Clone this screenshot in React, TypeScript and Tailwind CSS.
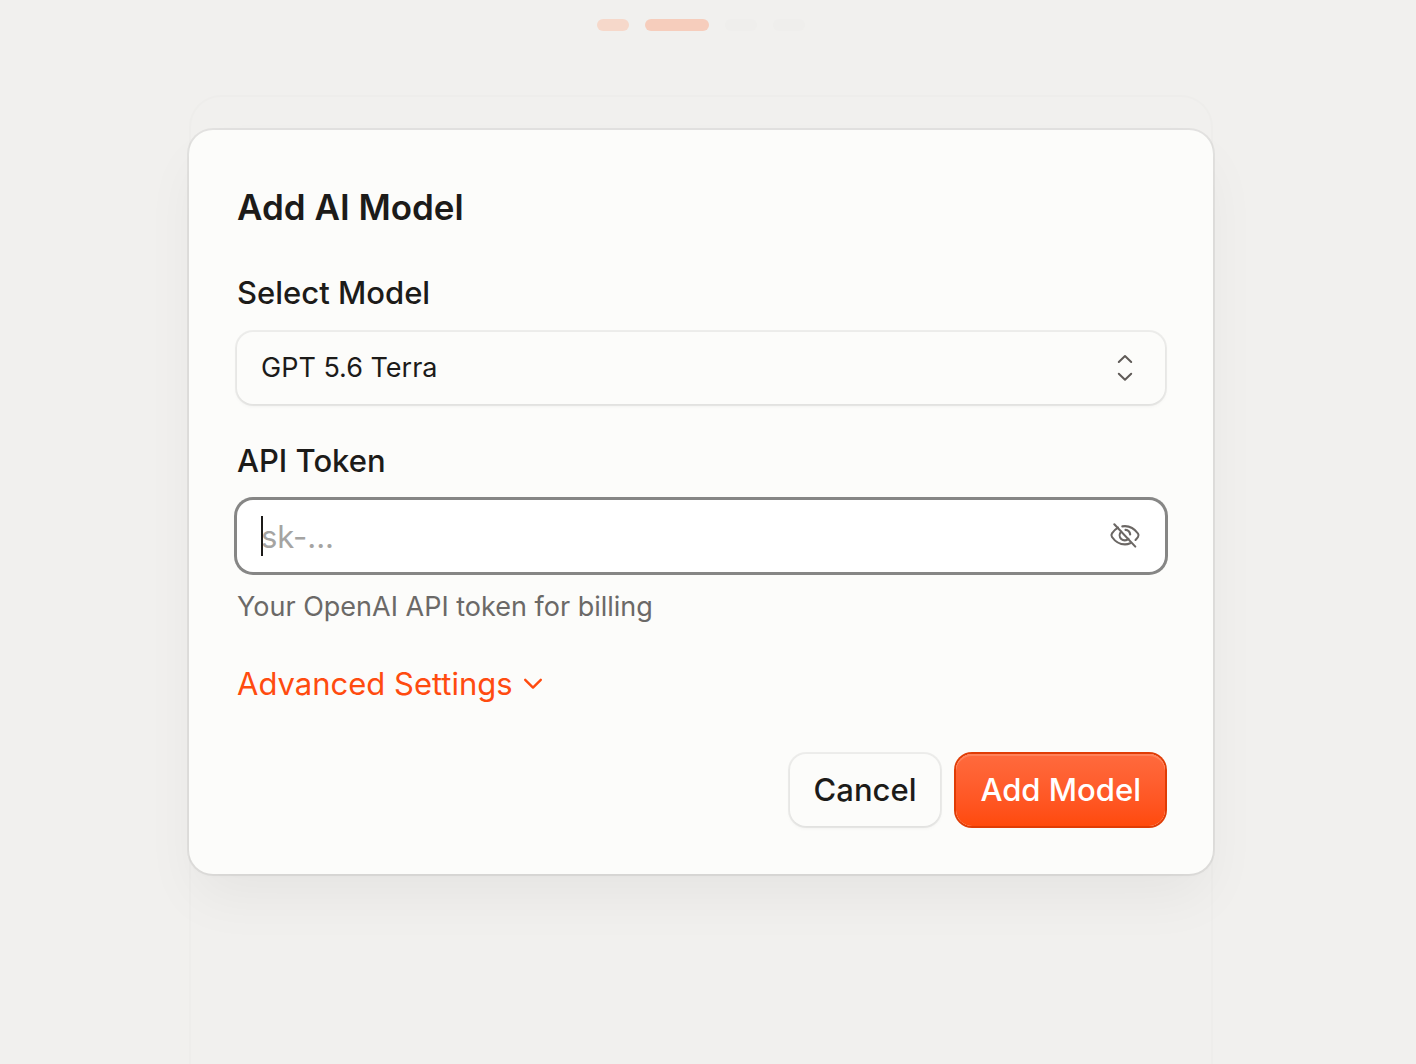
import { useState } from "react";

const steps = ["done", "current", "upcoming", "upcoming"];

const stepStyles: Record<string, string> = {
  done: "w-8 bg-[#f6d8ca]",
  current: "w-16 bg-[#f6cdbc]",
  upcoming: "w-8 bg-[#efeeec]",
};

const SelectorIcon = () => (
  <svg
    className="pointer-events-none absolute right-6 size-8 text-[#5f5a57]"
    viewBox="0 0 32 32"
    fill="none"
    stroke="currentColor"
    strokeWidth={2}
    strokeLinecap="round"
    strokeLinejoin="round"
    aria-hidden="true"
  >
    <path d="M9.8 10 16 4l6.200 6" />
    <path d="M9.8 21.800 16 27.800l6.200-6" />
  </svg>
);

const EyeOffIcon = () => (
  <svg
    className="size-8"
    viewBox="0 0 32 32"
    fill="none"
    stroke="currentColor"
    strokeWidth={2.1}
    strokeLinecap="round"
    strokeLinejoin="round"
    aria-hidden="true"
  >
    <path d="M5.300 4.300 26.300 26.600" />
    <path d="M13.300 6.400c1-.2 1.700-.3 2.700-.3 6 0 10.500 4 13 7.400.8 1.200.8 2.300 0 3.500-.7 1.100-1.500 2-2.500 3" />
    <path d="M9 7.600C6.400 9 4.600 11.100 3 13.400c-.8 1.200-.8 2.400 0 3.600 2.500 3.600 7 7.400 13 7.400 2 0 3.600-.4 5.200-1.100" />
    <path d="M12.100 11.700a5 5 0 0 0 7.300 7.100" />
    <path d="M16.500 9.900a5.300 5.300 0 0 1 4.700 4.600" />
  </svg>
);

const ChevronIcon = () => (
  <svg
    className="size-6"
    viewBox="0 0 24 24"
    fill="none"
    stroke="currentColor"
    strokeWidth={2.4}
    strokeLinecap="round"
    strokeLinejoin="round"
    aria-hidden="true"
  >
    <path d="M4.200 7.800 12 15.600l7.800-7.800" />
  </svg>
);

const AddModelDialog = () => {
  const [model, setModel] = useState("gpt-5.6-terra");
  const [token, setToken] = useState("");
  const [showToken, setShowToken] = useState(false);

  return (
    <form
      role="dialog"
      aria-labelledby="dialog-title"
      onSubmit={(e) => e.preventDefault()}
      className="w-full max-w-5xl rounded-3xl bg-[#fcfcfa] p-12 shadow-[0_0_0_2px_rgba(0,0,0,0.06),0_2px_4px_rgba(0,0,0,0.02),0_28px_56px_-6px_rgba(0,0,0,0.05)]"
    >
      <h2 id="dialog-title" className="text-[35px]/[58px] font-semibold">
        Add AI Model
      </h2>

      <div className="mt-8 flex flex-col gap-3.5">
        <label htmlFor="model" className="text-[31px]/[50px] font-medium">
          Select Model
        </label>
        <div className="relative flex items-center">
          <select
            id="model"
            value={model}
            onChange={(e) => setModel(e.target.value)}
            className="h-18 w-full appearance-none rounded-2xl bg-[#fcfcfa] px-6 text-[27px] shadow-[0_0_0_2px_rgba(0,0,0,0.06),0_2px_4px_rgba(0,0,0,0.06)] outline-none"
          >
            <option value="gpt-5.6-terra">GPT 5.6 Terra</option>
          </select>
          <SelectorIcon />
        </div>
      </div>

      <div className="mt-8 flex flex-col gap-3.5">
        <label htmlFor="token" className="text-[31px]/[50px] font-medium">
          API Token
        </label>
        <div className="relative flex h-18 items-center rounded-2xl bg-white px-6 ring-3 ring-[#868685]">
          <input
            id="token"
            type={showToken ? "text" : "password"}
            value={token}
            onChange={(e) => setToken(e.target.value)}
            placeholder="sk-..."
            aria-describedby="token-help"
            className="peer min-w-0 flex-1 bg-transparent pt-0.5 text-[31px] outline-none placeholder:text-[#a5a4a2] placeholder-shown:caret-transparent"
          />
          <span className="absolute left-6 hidden h-10 w-0.5 bg-[#1c1b19] peer-placeholder-shown:block" />
          <button
            type="button"
            aria-label="Toggle token visibility"
            onClick={() => setShowToken(!showToken)}
            className="text-[#6b6764]"
          >
            <EyeOffIcon />
          </button>
        </div>
        <p id="token-help" className="text-[27px]/[42px] text-[#6b6967]">
          Your OpenAI API token for billing
        </p>
      </div>

      <button
        type="button"
        className="mt-8 flex items-center gap-2 text-[31px]/12 text-[#ff4b0f]"
      >
        Advanced Settings
        <ChevronIcon />
      </button>

      <div className="mt-[46px] flex justify-end gap-4">
        <button
          type="button"
          className="h-18 rounded-2xl bg-[#fcfcfa] px-6 text-[31px] font-medium shadow-[0_0_0_2px_rgba(0,0,0,0.06),0_2px_4px_rgba(0,0,0,0.06)]"
        >
          Cancel
        </button>
        <button
          type="submit"
          className="h-18 rounded-2xl bg-linear-to-b from-[#ff6a3d] to-[#ff4a0a] px-6 text-[31px] font-medium text-white shadow-[0_0_0_2px_#e03c05,inset_0_2px_0_#ff8159]"
        >
          Add Model
        </button>
      </div>
    </form>
  );
};

export default function App() {
  return (
    <div className="relative flex min-h-screen flex-col items-center bg-[#f1f0ee] pt-[19px] pr-[14px] font-['Inter',sans-serif] text-[#1c1b19]">
      <div className="flex gap-4">
        {steps.map((step, i) => (
          <span key={i} className={`h-3 rounded-full ${stepStyles[step]}`} />
        ))}
      </div>
      <main className="mt-16 w-full max-w-5xl flex-1 rounded-t-[32px] border-2 border-b-0 border-[#eeedeb]" />

      <div className="absolute inset-0 flex items-start justify-center pt-[130px] pr-[14px]">
        <AddModelDialog />
      </div>
    </div>
  );
}
